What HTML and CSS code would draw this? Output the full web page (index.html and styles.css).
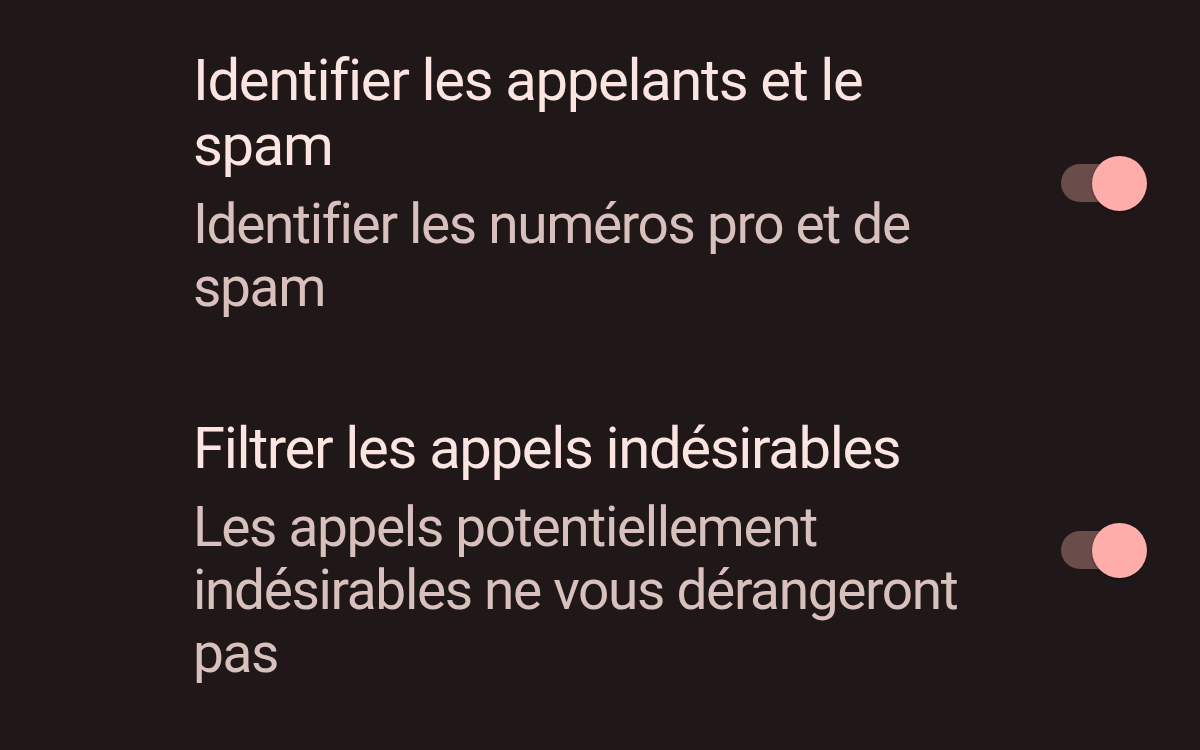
FILE: index.html
```html
<!DOCTYPE html>
<html lang="fr">

<head>
    <meta charset="UTF-8">
    <meta name="viewport" content="width=device-width, initial-scale=1.0">
    <title>Paramètres des appels</title>
    <link rel="stylesheet" href="styles.css">
</head>

<body>
    <div class="settings">
        <div class="pref">
            <div class="pref-text">
                <div class="pref-title">Identifier les appelants et le spam</div>
                <div class="pref-summary">Identifier les numéros pro et de spam</div>
            </div>
            <div class="switch on">
                <span class="track"></span>
                <span class="thumb"></span>
            </div>
        </div>

        <div class="pref">
            <div class="pref-text">
                <div class="pref-title">Filtrer les appels indésirables</div>
                <div class="pref-summary">Les appels potentiellement indésirables ne vous dérangeront pas</div>
            </div>
            <div class="switch on">
                <span class="track"></span>
                <span class="thumb"></span>
            </div>
        </div>
    </div>
</body>

</html>
```

FILE: styles.css
```css
* {
    margin: 0;
    padding: 0;
    box-sizing: border-box;
}

body {
    font-family: 'Roboto', 'Noto Sans', sans-serif;
    background: #201718;
    width: 1200px;
    height: 750px;
    overflow: hidden;
}

.settings {
    display: flex;
    flex-direction: column;
    gap: 97px;
    padding: 48px 53px 0 193px;
}

.pref {
    display: flex;
    align-items: center;
    justify-content: space-between;
}

.pref-text {
    width: 770px;
    display: flex;
    flex-direction: column;
    gap: 15px;
}

.pref-title {
    font-size: 58px;
    line-height: 65px;
    letter-spacing: -1.35px;
    color: #fce4e1;
}

.pref-summary {
    font-size: 55px;
    line-height: 63px;
    letter-spacing: -1.35px;
    color: #d8c0bd;
}

/* toggle: narrow track with the thumb sitting on its right end */
.switch {
    position: relative;
    width: 86px;
    height: 55px;
    flex-shrink: 0;
}

.track {
    position: absolute;
    left: 0;
    top: 8px;
    width: 79px;
    height: 38px;
    border-radius: 19px;
    background: #6a4c4a;
}

.thumb {
    position: absolute;
    right: 0;
    top: 0;
    width: 55px;
    height: 55px;
    border-radius: 50%;
    background: #ffadab;
    box-shadow: 0 1px 3px rgba(0, 0, 0, 0.35);
}
```
